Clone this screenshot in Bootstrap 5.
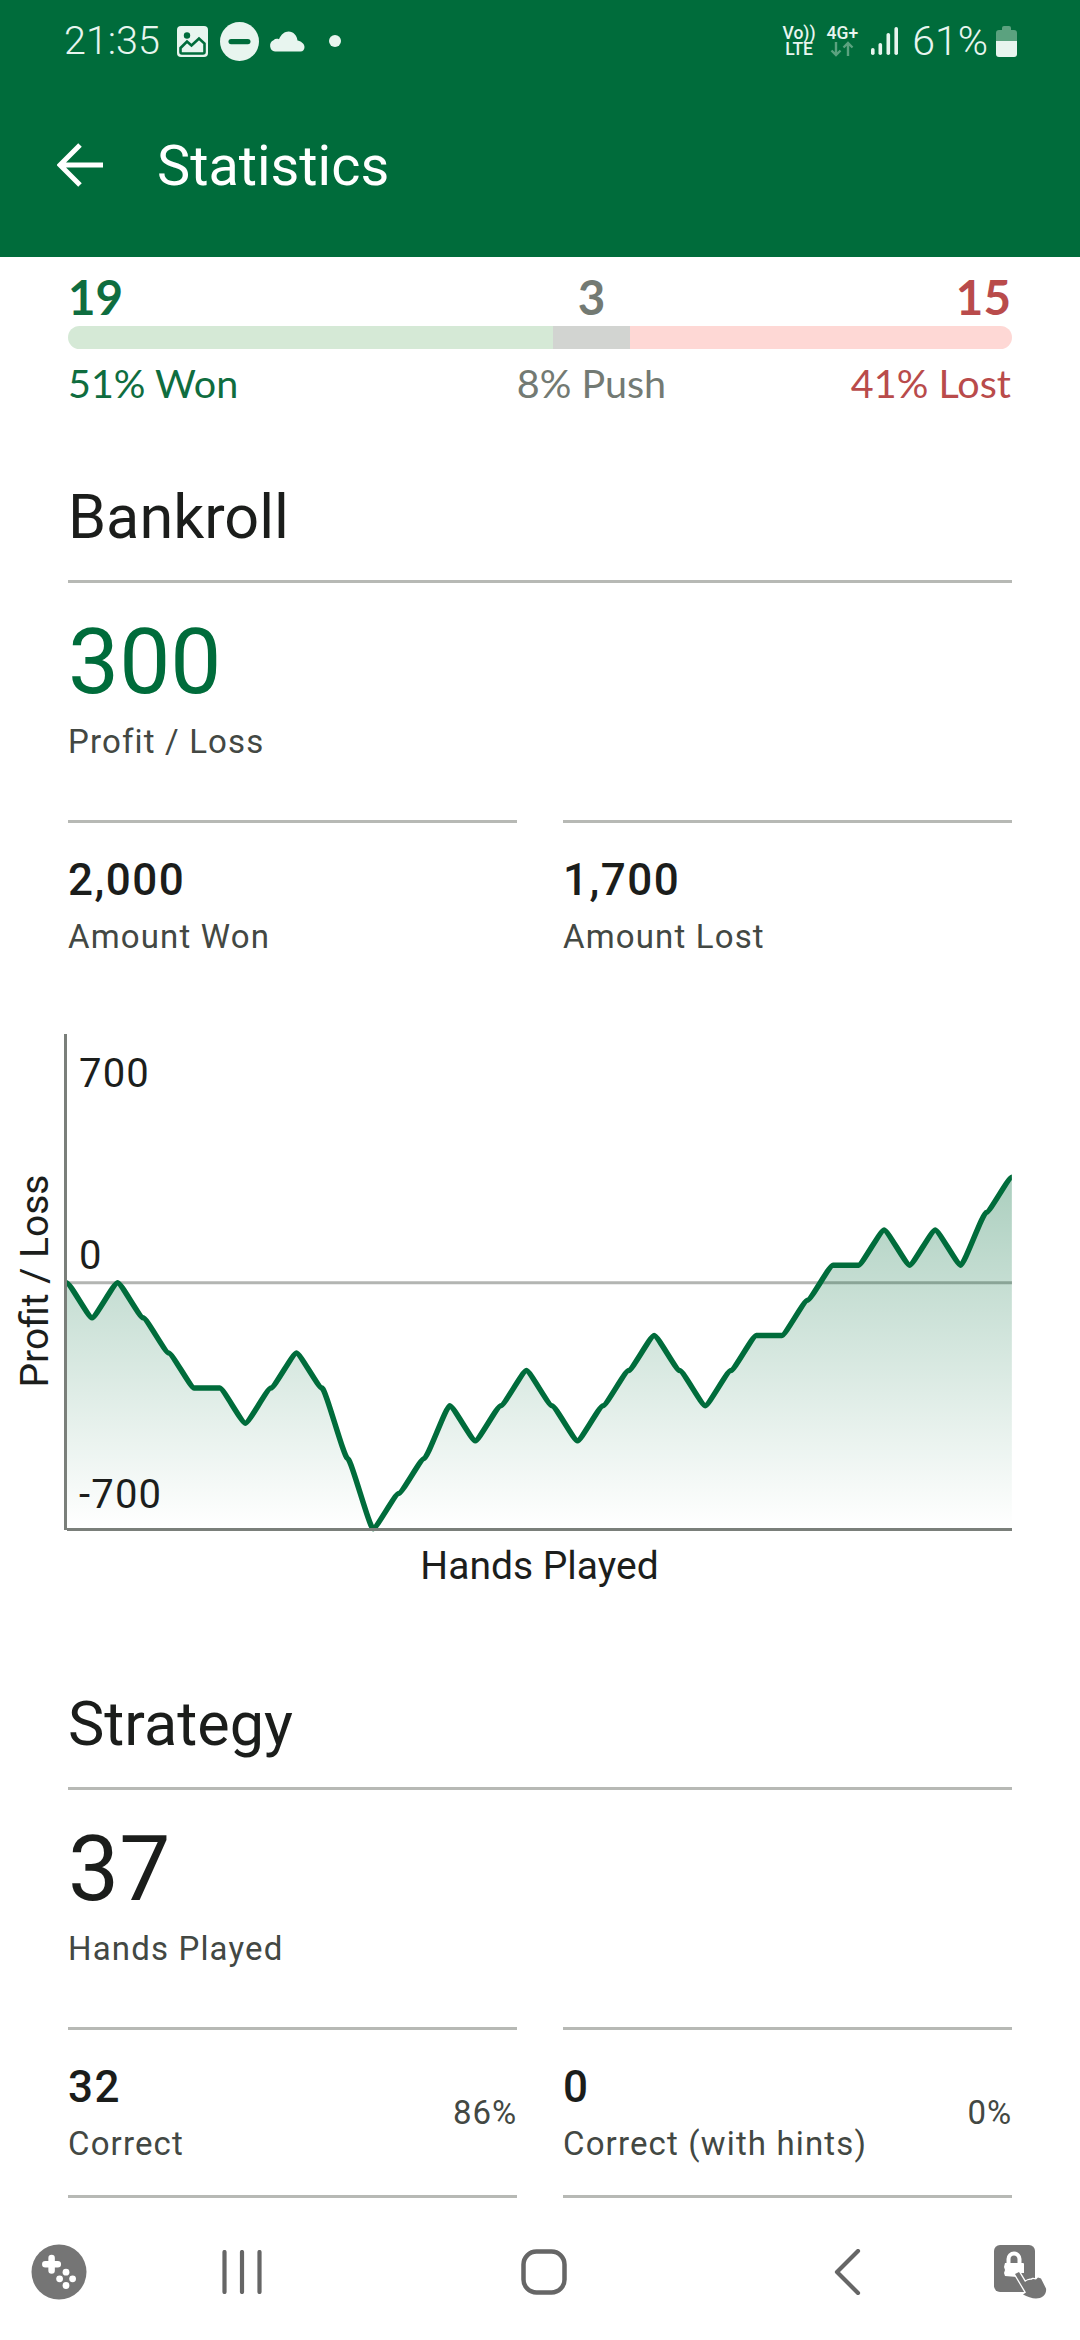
<!DOCTYPE html>
<html lang="en">
<head>
<meta charset="utf-8">
<title>Statistics</title>
<link href="https://cdn.jsdelivr.net/npm/bootstrap@5.3.0/dist/css/bootstrap.min.css" rel="stylesheet">
<style>
html,body{margin:0;background:#fff}
body{font-family:Roboto,"Liberation Sans",sans-serif;color:#1b1d1b}
.phone{width:1080px;height:2340px;overflow:hidden;background:#fff}
.appbar{background:#006c3b;color:#fff}
.statusrow{height:82px;padding:0 63px 0 64px;color:#e8f5ef}
.stime{font-size:39.5px;font-weight:300;line-height:44px;margin-right:17px}
.sicon{display:block;flex:none}
.dndmark{margin-left:12px}
.cloudmark{margin-left:9px}
.dotmark{margin-left:24px}
.netgap{margin-left:11px}
.signalmark{margin-left:13px}
.spct{font-size:41px;font-weight:300;line-height:44px;margin:0 8px 0 14px}
.netlabel{font-size:17.5px;font-weight:500;line-height:16px;text-align:center}
.toolrow{height:175px;padding-left:57px;padding-bottom:10px}
.tooltitle{font-size:55.8px;line-height:64px;margin-left:53px;margin-top:2px;font-weight:400}
.pagebody{padding:14px 68px 0;min-height:0}
.tallyrow{font-family:Lato,"Liberation Sans",sans-serif}
.tallynum{font-size:47.5px;font-weight:700;line-height:52px}
.tallylab{font-size:39.5px;line-height:44px;margin-top:12px}
.cellwon{width:51.4%;color:#0f6d3f}
.cellpush{width:8.1%;color:#737a73}
.celllost{width:40.5%;color:#b94b4b;padding-right:1px}
.tallybar{height:23px;margin-top:3px;border-radius:12px;overflow:hidden}
.segwon{background:#d5e9d6}.segpush{background:#d2d4d1}.seglost{background:#fed8d5}
.sechead{font-size:61.2px;line-height:72px;font-weight:400;margin:0;padding-bottom:27px;border-bottom:3px solid #b7b9b5}
.firsthead{margin-top:76px}
.bignum{font-size:91px;line-height:106px;margin-top:26px}
.bignum-green{color:#006c3b}
.sublab{font-size:33px;line-height:40px;color:#434843;letter-spacing:1.15px}
.bigsub{margin-top:7px;margin-bottom:58px}
.pairrow{--bs-gutter-x:46px}
.statcell{border-top:3px solid #b7b9b5;padding-top:31px}
.statpad{padding-bottom:31px}
.valnum{font-size:44px;line-height:52px;font-weight:500;letter-spacing:1.5px}
.valsub{margin-top:11px}
.pct{font-size:33px;line-height:40px;color:#434843;letter-spacing:.9px}
.closing{border-top:3px solid #b7b9b5}
.chartwrap{margin:73px -68px 0}
.chartsvg{display:block}
.chartsvg text{font-family:Roboto,"Liberation Sans",sans-serif;font-size:39px;fill:#1c1e1c}
.chartsvg .ticklab{font-size:40px;letter-spacing:1.2px}
.strategyhead{margin-top:98px}
.navrow{height:136px;display:grid;grid-template-columns:118px 248px 356px 250px 98px;justify-items:center;align-items:center;background:#fff}
</style>
</head>
<body>
<div class="phone d-flex flex-column">
  <header class="appbar flex-shrink-0">
    <div class="statusrow d-flex align-items-center">
      <span class="stime">21:35</span>
      <svg class="sicon" width="31" height="31" viewBox="0 0 31 31"><rect width="31" height="31" rx="4" fill="#e8f5ef"/><circle cx="10" cy="9.5" r="3.2" fill="#006c3b"/><path d="M3.5 22 10 15.5l4.5 4L22 12.5l5.5 5V26a1.5 1.5 0 0 1-1.5 1.5H5A1.5 1.5 0 0 1 3.5 26z" fill="none" stroke="#006c3b" stroke-width="2.6"/></svg>
      <svg class="sicon dndmark" width="39" height="39" viewBox="0 0 39 39"><circle cx="19.5" cy="19.5" r="19.5" fill="#e8f5ef"/><rect x="8.5" y="17" width="22" height="5.2" rx="2.6" fill="#006c3b"/></svg>
      <svg class="sicon cloudmark" width="37" height="21" viewBox="0 0 37 21"><path d="M7 20.5a6 6 0 0 1-1.5-11.3C7 7.8 9 7.5 11 8.3 13 3.2 17 .5 20.5.5c5 0 8.5 4 9 9 3 .5 7 3 7 6.5 0 2.5-1.5 4.5-4 4.5z" fill="#e8f5ef"/></svg>
      <svg class="sicon dotmark" width="12" height="12" viewBox="0 0 12 12"><circle cx="6" cy="6" r="6" fill="#e8f5ef"/></svg>
      <div class="ms-auto d-flex align-items-center">
        <div class="netlabel"><div>Vo))</div><div>LTE</div></div>
        <div class="netlabel netgap"><div>4G+</div>
          <svg class="sicon mx-auto" width="26" height="16" viewBox="0 0 26 16"><path d="M7 1v13M2.5 9.5 7 14l4.5-4.500M19 15V2m-4.500 4.500L19 2l4.500 4.500" fill="none" stroke="#5ba27f" stroke-width="2.4"/></svg></div>
        <svg class="sicon signalmark" width="27" height="29" viewBox="0 0 27 29"><g fill="#e8f5ef"><rect x="0" y="21" width="3.6" height="7" rx="1.8"/><rect x="7.5" y="16" width="3.6" height="12" rx="1.8"/><rect x="15.5" y="6" width="3.6" height="22" rx="1.8"/><rect x="23.4" y="0" width="3.6" height="28" rx="1.8"/></g></svg>
        <span class="spct">61%</span>
        <svg class="sicon" width="21" height="31" viewBox="0 0 21 31"><path d="M6 2a2 2 0 0 1 2-2h5a2 2 0 0 1 2 2v2h3a3 3 0 0 1 3 3v8H0V7a3 3 0 0 1 3-3h3z" fill="#5ba27f"/><path d="M0 15h21v13a3 3 0 0 1-3 3H3a3 3 0 0 1-3-3z" fill="#e8f5ef"/></svg>
      </div>
    </div>
    <div class="toolrow d-flex align-items-center">
      <svg class="sicon" width="47" height="46" viewBox="0 0 47 46"><path d="M46 23H4M23 3 3 23l20 20" fill="none" stroke="#fff" stroke-width="5"/></svg>
      <span class="tooltitle">Statistics</span>
    </div>
  </header>

  <main class="pagebody flex-grow-1 overflow-hidden">
    <div class="tallyrow d-flex tallynum">
      <div class="cellwon">19</div>
      <div class="cellpush d-flex justify-content-center">3</div>
      <div class="celllost text-end">15</div>
    </div>
    <div class="tallybar d-flex">
      <div class="cellwon segwon"></div>
      <div class="cellpush segpush"></div>
      <div class="celllost seglost"></div>
    </div>
    <div class="tallyrow d-flex tallylab">
      <div class="cellwon">51% Won</div>
      <div class="cellpush d-flex justify-content-center text-nowrap">8% Push</div>
      <div class="celllost text-end">41% Lost</div>
    </div>

    <h2 class="sechead firsthead">Bankroll</h2>
    <div class="bignum bignum-green">300</div>
    <div class="sublab bigsub">Profit / Loss</div>
    <div class="row pairrow">
      <div class="col-6"><div class="statcell"><div class="valnum">2,000</div><div class="sublab valsub">Amount Won</div></div></div>
      <div class="col-6"><div class="statcell"><div class="valnum">1,700</div><div class="sublab valsub">Amount Lost</div></div></div>
    </div>

    <div class="chartwrap">
      <svg class="chartsvg" width="1080" height="560" viewBox="0 1030 1080 560">
        <defs><linearGradient id="areaFade" gradientUnits="userSpaceOnUse" x1="0" y1="1175" x2="0" y2="1528"><stop offset="0" stop-color="#006c3b" stop-opacity=".33"/><stop offset="1" stop-color="#006c3b" stop-opacity="0"/></linearGradient></defs>
        <line x1="66" x2="1012" y1="1282.7" y2="1282.7" stroke="#b3b5b2" stroke-width="3"/>
        <path fill="url(#areaFade)" d="M66.5 1282.7c3.5 0 22.05 35.14 25.55 35.14c3.5 0 22.05-35.14 25.55-35.14c3.5 0 22.05 35.14 25.55 35.14c3.5 0 22.05 35.14 25.55 35.14c3.5 0 22.05 35.14 25.55 35.14c3.5 0 22.05 0 25.55 0c3.5 0 22.05 35.14 25.55 35.14c3.5 0 22.05-35.14 25.55-35.14c3.5 0 22.05-35.14 25.55-35.14c3.5 0 22.05 35.14 25.55 35.14c3.5 0 22.05 70.28 25.55 70.28c3.5 0 22.05 70.28 25.55 70.28c3.5 0 22.05-35.14 25.55-35.14c3.5 0 22.05-35.14 25.55-35.14c3.5 0 22.05-52.71 25.55-52.71c3.5 0 22.05 35.14 25.55 35.14c3.5 0 22.05-35.14 25.55-35.14c3.5 0 22.05-35.14 25.55-35.14c3.5 0 22.05 35.14 25.55 35.14c3.5 0 22.05 35.14 25.55 35.14c3.5 0 22.05-35.14 25.55-35.14c3.5 0 22.05-35.14 25.55-35.14c3.5 0 22.05-35.14 25.55-35.14c3.5 0 22.05 35.14 25.55 35.14c3.5 0 22.05 35.14 25.55 35.14c3.5 0 22.05-35.14 25.55-35.14c3.5 0 22.05-35.14 25.55-35.14c3.5 0 22.05 0 25.55 0c3.5 0 22.05-35.14 25.55-35.14c3.5 0 22.05-35.14 25.55-35.14c3.5 0 22.05 0 25.55 0c3.5 0 22.05-35.14 25.55-35.14c3.5 0 22.05 35.14 25.55 35.14c3.5 0 22.05-35.14 25.55-35.14c3.5 0 22.05 35.14 25.55 35.14c3.5 0 22.05-52.71 25.55-52.71c3.5 0 22.05-35.14 25.55-35.14V1528.7H66.5z"/>
        <path fill="none" stroke="#006c3b" stroke-width="5.5" d="M66.5 1282.7c3.5 0 22.05 35.14 25.55 35.14c3.5 0 22.05-35.14 25.55-35.14c3.5 0 22.05 35.14 25.55 35.14c3.5 0 22.05 35.14 25.55 35.14c3.5 0 22.05 35.14 25.55 35.14c3.5 0 22.05 0 25.55 0c3.5 0 22.05 35.14 25.55 35.14c3.5 0 22.05-35.14 25.55-35.14c3.5 0 22.05-35.14 25.55-35.14c3.5 0 22.05 35.14 25.55 35.14c3.5 0 22.05 70.28 25.55 70.28c3.5 0 22.05 70.28 25.55 70.28c3.5 0 22.05-35.14 25.55-35.14c3.5 0 22.05-35.14 25.55-35.14c3.5 0 22.05-52.71 25.55-52.71c3.5 0 22.05 35.14 25.55 35.14c3.5 0 22.05-35.14 25.55-35.14c3.5 0 22.05-35.14 25.55-35.14c3.5 0 22.05 35.14 25.55 35.14c3.5 0 22.05 35.14 25.55 35.14c3.5 0 22.05-35.14 25.55-35.14c3.5 0 22.05-35.14 25.55-35.14c3.5 0 22.05-35.14 25.55-35.14c3.5 0 22.05 35.14 25.55 35.14c3.5 0 22.05 35.14 25.55 35.14c3.5 0 22.05-35.14 25.55-35.14c3.5 0 22.05-35.14 25.55-35.14c3.5 0 22.05 0 25.55 0c3.5 0 22.05-35.14 25.55-35.14c3.5 0 22.05-35.14 25.55-35.14c3.5 0 22.05 0 25.55 0c3.5 0 22.05-35.14 25.55-35.14c3.5 0 22.05 35.14 25.55 35.14c3.5 0 22.05-35.14 25.55-35.14c3.5 0 22.05 35.14 25.55 35.14c3.5 0 22.05-52.71 25.55-52.71c3.5 0 22.05-35.14 25.55-35.14"/>
        <path d="M65.5 1034V1530M67 1529.5H1012" fill="none" stroke="#7a7f7a" stroke-width="3"/>
        <text class="ticklab" x="79" y="1086.5">700</text>
        <text class="ticklab" x="79" y="1268.5">0</text>
        <text class="ticklab" x="79" y="1507.5">-700</text>
        <text x="48" y="1281" text-anchor="middle" transform="rotate(-90 48 1281)">Profit / Loss</text>
        <text x="539.5" y="1578.5" text-anchor="middle">Hands Played</text>
      </svg>
    </div>

    <h2 class="sechead strategyhead">Strategy</h2>
    <div class="bignum">37</div>
    <div class="sublab bigsub">Hands Played</div>
    <div class="row pairrow">
      <div class="col-6"><div class="statcell statpad d-flex justify-content-between align-items-center"><div><div class="valnum">32</div><div class="sublab valsub">Correct</div></div><div class="pct">86%</div></div></div>
      <div class="col-6"><div class="statcell statpad d-flex justify-content-between align-items-center"><div><div class="valnum">0</div><div class="sublab valsub">Correct (with hints)</div></div><div class="pct">0%</div></div></div>
    </div>
    <div class="row pairrow">
      <div class="col-6"><div class="closing"></div></div>
      <div class="col-6"><div class="closing"></div></div>
    </div>
  </main>

  <nav class="navrow flex-shrink-0">
    <svg width="56" height="56" viewBox="0 0 56 56"><circle cx="28" cy="28" r="27.5" fill="#757575"/><path d="M20.6 14v12.5M14.3 20.2h12.5" stroke="#fff" stroke-width="6.5" stroke-linecap="round"/><g fill="#fff"><circle cx="35" cy="28.2" r="3.4"/><circle cx="28.6" cy="34.8" r="3.4"/><circle cx="41.6" cy="34.8" r="3.4"/><circle cx="35" cy="41.5" r="3.4"/></g></svg>
    <svg width="40" height="44" viewBox="0 0 40 44"><path d="M2.5 2v40M20 2v40M37.5 2v40" stroke="#666" stroke-width="4.2" stroke-linecap="round"/></svg>
    <svg width="46" height="46" viewBox="0 0 46 46"><rect x="2.5" y="2.5" width="41" height="41" rx="13" fill="none" stroke="#666" stroke-width="4.5"/></svg>
    <svg width="27" height="46" viewBox="0 0 27 46"><path d="M24 2 3 23l21 21" fill="none" stroke="#666" stroke-width="4.2" stroke-linecap="round" stroke-linejoin="round"/></svg>
    <svg width="54" height="56" viewBox="0 0 54 56"><rect x="0" y="1" width="41" height="47" rx="6" fill="#757575"/><path d="M14.5 20v-5a5.5 5.5 0 0 1 11 0v5" fill="none" stroke="#fff" stroke-width="4"/><path d="M11 19h18a1 1 0 0 1 1 1v9h-8l1 4-12-1-1-3 1-3-1-3z" fill="#fff"/><path d="M21 30l4-2 6 10c2-1.5 5-2.5 6-2l2-1 3 .5 2-2 3 1 5 10c1 6-4 10-10 10-4 0-9-2-13-4l3-2z" fill="#757575" stroke="#fff" stroke-width="2.6" stroke-linejoin="round" paint-order="stroke"/></svg>
  </nav>
</div>
<script src="https://cdn.jsdelivr.net/npm/bootstrap@5.3.0/dist/js/bootstrap.bundle.min.js"></script>
</body>
</html>
